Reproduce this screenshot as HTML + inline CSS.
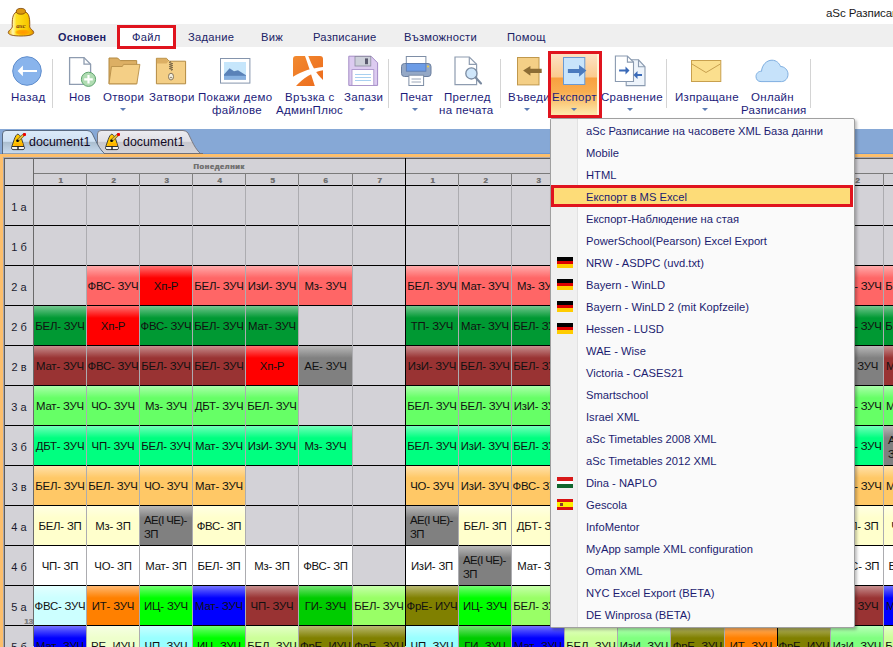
<!DOCTYPE html>
<html><head><meta charset="utf-8">
<style>
*{box-sizing:border-box;margin:0;padding:0}
html,body{width:893px;height:647px;overflow:hidden;background:#fff;font-family:"Liberation Sans",sans-serif}
#root{position:relative;width:893px;height:647px;overflow:hidden}
.abs{position:absolute}
.title{position:absolute;left:826px;top:6px;font-size:11.6px;color:#1a1a1a;white-space:nowrap;letter-spacing:-0.1px}
.tabsband{position:absolute;left:0;top:24px;width:893px;height:23px;background:#efefef}
.mt{position:absolute;top:31px;font-size:11.2px;letter-spacing:0.25px;color:#1a2266;white-space:nowrap}
.filebox{position:absolute;left:117px;top:25px;width:59px;height:24px;border:3px solid #e0141e;background:#fff}
.rl{position:absolute;font-size:11.5px;letter-spacing:0.3px;color:#1c1c7a;white-space:nowrap;text-align:center;line-height:12px}
.sep{position:absolute;top:59px;width:1px;height:49px;background:#d4d4d4}
.arr{position:absolute;top:108px;width:0;height:0;border-left:3px solid transparent;border-right:3px solid transparent;border-top:3px solid #5a7bb4}
.docband{position:absolute;left:0;top:129px;width:893px;height:25px;background:#86a8d6}
.orange{position:absolute;left:0;top:154px;width:893px;height:493px;background:#fdbf6c}
.grid{position:absolute;left:3px;top:157px;width:890px;height:490px;background:#d3d2d7;border-left:1px solid #a8a8b0;border-top:1px solid #a8a8b0;box-shadow:inset 1px 1px 0 #5e5e5e}
.c{position:absolute;width:52px;height:39px;font-size:11.4px;line-height:41px;text-align:center;color:#111;white-space:nowrap;overflow:hidden;letter-spacing:-0.2px}
.c.t2{line-height:13.5px;padding-top:8px;text-align:left;padding-left:4px;letter-spacing:-0.6px}
.hl{position:absolute;left:5px;width:888px;height:1px;background:#000}
.vl{position:absolute;top:185px;width:1px;height:462px;background:#acacb0}
.vd{position:absolute;top:158px;width:1px;height:488px;background:#000}
.hvl{position:absolute;top:173px;width:1px;height:12px;background:#808080}
.dayname{position:absolute;top:162px;font-size:7.5px;font-weight:bold;color:#707070;text-align:center;letter-spacing:0.6px;text-shadow:0.5px 0 0 #707070}
.colnum{position:absolute;top:176px;width:53px;font-size:8px;font-weight:bold;color:#707070;text-align:center;text-shadow:0.5px 0 0 #707070;padding-left:2px}
.rh{position:absolute;left:5px;width:28px;height:39px;line-height:42px;font-size:11px;color:#1a1a2e;text-align:center}
.menu{position:absolute;left:550px;top:118px;width:305px;height:510px;background:#fafafa;border:1px solid #a0a0a0;border-radius:2px;box-shadow:2px 2px 3px rgba(0,0,0,0.25)}
.micol{position:absolute;left:0;top:0;width:27px;height:508px;background:#f0f0f0;border-right:1px solid #e2e2e2}
.mi{position:absolute;left:35px;height:22px;line-height:24px;font-size:11.2px;color:#1c1c70;white-space:nowrap}
.mhl{position:absolute;left:0;width:302px;height:22px;background:#fddc78;border:3px solid #e0141e}
.flag{position:absolute;left:6px;width:16px;height:11px}
</style></head><body><div id="root">
<!-- title -->
<div class="title">aSc Разписание на часовете</div>
<div class="tabsband"></div>
<!-- bell logo -->
<svg class="abs" style="left:0;top:0" width="40" height="40" viewBox="0 0 40 40">
 <defs>
  <linearGradient id="bgh" x1="0" y1="0" x2="1" y2="0"><stop offset="0" stop-color="#f0b000"/><stop offset="0.18" stop-color="#fff6b0"/><stop offset="0.32" stop-color="#ffe020"/><stop offset="0.75" stop-color="#f8c800"/><stop offset="1" stop-color="#e09000"/></linearGradient>
  <radialGradient id="bgo" cx="0.5" cy="0.5" r="0.5"><stop offset="0" stop-color="#ff9800"/><stop offset="0.7" stop-color="#ffa800"/><stop offset="1" stop-color="#ffc000" stop-opacity="0"/></radialGradient>
 </defs>
 <path d="M12.3 27 C12 20 12.5 14 16 12.3 C18 11.3 24 11.3 26 12.3 C29.5 14 30 20 29.7 27 C30 29 33.5 30 33.7 32.5 C33.8 35 28 36 21 36 C14 36 8.2 35 8.3 32.5 C8.5 30 12 29 12.3 27 Z" fill="url(#bgh)" stroke="#8a4a10" stroke-width="0.9"/>
 <ellipse cx="23" cy="32.3" rx="8.5" ry="3.2" fill="url(#bgo)"/>
 <ellipse cx="20.9" cy="11.3" rx="4.6" ry="2.9" fill="#dc9812" stroke="#7a4000" stroke-width="0.8"/>
 <text x="21" y="28" font-size="7" font-weight="bold" font-style="italic" text-anchor="middle" fill="#7a3a10" font-family="Liberation Serif">asc</text>
</svg>
<div class="mt" style="left:58px;font-weight:bold;font-size:10.8px">Основен</div>
<div class="filebox"></div>
<div class="mt" style="left:132px">Файл</div>
<div class="mt" style="left:188px">Задание</div>
<div class="mt" style="left:261px">Виж</div>
<div class="mt" style="left:313px">Разписание</div>
<div class="mt" style="left:404px">Възможности</div>
<div class="mt" style="left:507px">Помощ</div>

<!-- ribbon -->
<svg class="abs" style="left:12px;top:56px" width="30" height="30" viewBox="0 0 30 30">
 <circle cx="15" cy="15" r="14.3" fill="#89b4ec" stroke="#5f8dcc" stroke-width="1"/>
 <path d="M5.6 15 L10.9 9.6 L10.9 13.9 L25 13.9 L25 16.1 L10.9 16.1 L10.9 20.3 Z" fill="#fff"/>
</svg>
<div class="rl" style="left:11px;top:91px">Назад</div>
<div class="sep" style="left:52px"></div>

<svg class="abs" style="left:67px;top:56px" width="32" height="32" viewBox="0 0 32 32">
 <path d="M2.6 1.6 L17 1.6 L23.6 8.2 L23.6 28.4 L2.6 28.4 Z" fill="#fff" stroke="#8e9cb0" stroke-width="1.3"/>
 <path d="M17 1.6 L17 8.2 L23.6 8.2" fill="none" stroke="#8e9cb0" stroke-width="1.3"/>
 <circle cx="21.5" cy="23.3" r="7.1" fill="#b0dcb2" stroke="#5ea46e" stroke-width="1"/>
 <path d="M21.5 19 V27.6 M17.2 23.3 H25.8" stroke="#fff" stroke-width="2.2"/>
</svg>
<div class="rl" style="left:69px;top:91px">Нов</div>

<svg class="abs" style="left:108px;top:57px" width="33" height="28" viewBox="0 0 33 28">
 <path d="M1 1 L9.6 1 L12.2 3.6 L28.7 3.6 L28.7 26.8 L1 26.8 Z" fill="#dcaf64" stroke="#b38a42" stroke-width="1"/>
 <path d="M3.5 9.5 L14.3 9.5 L15.5 7.4 L31.9 7.4 L28.8 26.8 L1 26.8 Z" fill="#f4cf86" stroke="#b8904a" stroke-width="0.9"/>
</svg>
<div class="rl" style="left:103px;top:91px">Отвори</div>
<div class="arr" style="left:120px"></div>

<svg class="abs" style="left:155px;top:57px" width="32" height="28" viewBox="0 0 32 28">
 <path d="M1.4 1.3 L11.5 1.3 L14 4.2 L30.6 4.2 L30.6 26.8 L1.4 26.8 Z" fill="#f4cf86" stroke="#b38a42" stroke-width="1"/>
 <path d="M1.9 1.8 L11.3 1.8 L13.4 4.2 L11.6 6.6 L1.9 6.6 Z" fill="#dcaf64"/>
 <path d="M16 4.6 l-1.7 1 l3.4 1 l-3.4 1 l3.4 1 l-3.4 1 l3.4 1 l-3.4 1 l3.4 1 l-1.7 0.8" fill="none" stroke="#6a5a40" stroke-width="0.9"/>
 <ellipse cx="16" cy="19.6" rx="2.5" ry="3.4" fill="#f4f0e0" stroke="#7a6a50" stroke-width="0.9"/>
 <circle cx="16" cy="20.5" r="0.8" fill="#7a6a50"/>
</svg>
<div class="rl" style="left:149px;top:91px">Затвори</div>

<svg class="abs" style="left:220px;top:58px" width="31" height="26" viewBox="0 0 31 26">
 <rect x="0.5" y="0.5" width="29.4" height="24.6" fill="#fff" stroke="#8494ac" stroke-width="1"/>
 <rect x="4" y="4" width="22" height="17.4" fill="#c6e6fb"/>
 <path d="M4 16.5 L9.6 10.2 L14 13.2 L18 12.2 L26 17.2 L26 21.4 L4 21.4 Z" fill="#5a82b8"/>
 <path d="M4 17.8 L26 17.8 L26 21.4 L4 21.4 Z" fill="#86b0e0"/>
</svg>
<div class="rl" style="left:198px;top:91px">Покажи демо</div>
<div class="rl" style="left:212px;top:104px">файлове</div>

<svg class="abs" style="left:293px;top:56px" width="30" height="30" viewBox="0 0 30 30">
 <defs><linearGradient id="ap" x1="0" y1="0" x2="1" y2="1"><stop offset="0" stop-color="#f28a30"/><stop offset="1" stop-color="#ec6a1c"/></linearGradient></defs>
 <rect x="0" y="0" width="30" height="30" rx="3" fill="url(#ap)"/>
 <path d="M12 0 L15.3 0 C18.5 9 23.5 18 30 24 L30 30 L21.8 30 C18 18 15 8 12 0 Z" fill="#fff"/>
 <path d="M0 20.7 C9 15 19 12 30 11 L30 14.2 C20 16 10 22 3 30 L0 30 Z" fill="#fff"/>
</svg>
<div class="rl" style="left:285px;top:91px">Връзка с</div>
<div class="rl" style="left:276px;top:104px">АдминПлюс</div>

<svg class="abs" style="left:348px;top:55px" width="31" height="31" viewBox="0 0 31 31">
 <path d="M0.8 1.2 L23 1.2 L29.6 7.8 L29.6 30.4 L0.8 30.4 Z" fill="#dccbf0" stroke="#a48cc6" stroke-width="1"/>
 <rect x="7" y="1.5" width="15.8" height="9.5" fill="#cdd0da" stroke="#8a8a9e" stroke-width="0.8"/>
 <rect x="17" y="3.4" width="3" height="5.8" fill="#5a5a6e"/>
 <rect x="4" y="14.6" width="21.8" height="15.8" fill="#fff" stroke="#a48cc6" stroke-width="0.8"/>
 <path d="M7 19.5 H23 M7 22.5 H23 M7 25.5 H23" stroke="#a8d0f0" stroke-width="1"/>
</svg>
<div class="rl" style="left:344px;top:91px">Запази</div>
<div class="arr" style="left:359px"></div>
<div class="sep" style="left:388px"></div>

<svg class="abs" style="left:401px;top:56px" width="31" height="30" viewBox="0 0 31 30">
 <rect x="5.3" y="0.5" width="19.6" height="8" fill="#fff" stroke="#7e8ea6" stroke-width="1"/>
 <rect x="0.5" y="7.5" width="29.5" height="13" rx="3" fill="#94a8c6" stroke="#6a7e9e" stroke-width="1"/>
 <rect x="5.3" y="7.5" width="19.6" height="7.7" fill="#6c9ce6" stroke="#5a7ab0" stroke-width="0.8"/>
 <rect x="7.9" y="19.2" width="14.7" height="10.3" fill="#fff" stroke="#7e8ea6" stroke-width="1"/>
 <path d="M10.5 23 H20 M10.5 26 H20" stroke="#9aa6b8" stroke-width="1"/>
 <circle cx="27" cy="10.5" r="1" fill="#f0d040"/>
</svg>
<div class="rl" style="left:400px;top:91px">Печат</div>
<div class="arr" style="left:412px"></div>

<svg class="abs" style="left:454px;top:56px" width="29" height="30" viewBox="0 0 29 30">
 <path d="M1 1 L15.3 1 L22.6 8.3 L22.6 28.7 L1 28.7 Z" fill="#fff" stroke="#8e9cb0" stroke-width="1.2"/>
 <path d="M15.3 1 L15.3 8.3 L22.6 8.3" fill="none" stroke="#8e9cb0" stroke-width="1.2"/>
 <circle cx="17.4" cy="17.4" r="5.6" fill="#cfe6fa" stroke="#7a8aa0" stroke-width="1.3"/>
 <path d="M21.6 21.6 L27 27.4" stroke="#7a8aa0" stroke-width="2.2" stroke-linecap="round"/>
</svg>
<div class="rl" style="left:444px;top:91px">Преглед</div>
<div class="rl" style="left:439px;top:104px">на печата</div>
<div class="sep" style="left:500px"></div>

<svg class="abs" style="left:516px;top:56px" width="28" height="30" viewBox="0 0 28 30">
 <rect x="1.5" y="1.5" width="21.5" height="27.4" fill="#f4cf86" stroke="#c0984c" stroke-width="1"/>
 <path d="M7.1 14.5 L14.4 10 L14.4 12.75 L25.7 12.75 L25.7 16.9 L14.4 16.9 L14.4 19.7 Z" fill="#8c6c34"/>
</svg>
<div class="rl" style="left:508px;top:91px">Въведи</div>
<div class="arr" style="left:524px"></div>

<!-- export highlighted -->
<div class="abs" style="left:548px;top:51px;width:54px;height:67px;border:3px solid #e0141e;background:linear-gradient(#fde2c4 0,#fbca8e 23px,#f8a040 24px,#f9ae50 38px,#fde8aa 60px);box-shadow:inset -2px 0 0 #fff4d8"></div>
<svg class="abs" style="left:563px;top:57px" width="28" height="28" viewBox="0 0 28 28">
 <rect x="0.5" y="0.5" width="21.3" height="27" fill="#c8e4fb" stroke="#6a9ad4" stroke-width="1"/>
 <path d="M23.4 13.6 L16.1 8 L16.1 11.9 L4.9 11.9 L4.9 15.9 L16.1 15.9 L16.1 19.8 Z" fill="#4a7abe"/>
</svg>
<div class="rl" style="left:552px;top:91px">Експорт</div>
<div class="arr" style="left:571px"></div>

<svg class="abs" style="left:614px;top:55px" width="32" height="32" viewBox="0 0 32 32">
 <path d="M12.2 4.8 L24.5 4.8 L31 11.8 L31 30.6 L12.2 30.6 Z" fill="#eef4fb" stroke="#8a9ab0" stroke-width="1.1"/>
 <path d="M24.5 4.8 L24.5 11.8 L31 11.8" fill="none" stroke="#8a9ab0" stroke-width="1.1"/>
 <path d="M1.4 1 L13.4 1 L19.5 7.1 L19.5 26.5 L1.4 26.5 Z" fill="#fff" stroke="#8a9ab0" stroke-width="1.1"/>
 <path d="M13.4 1 L13.4 7.1 L19.5 7.1" fill="none" stroke="#8a9ab0" stroke-width="1.1"/>
 <path d="M5.1 14.6 L11.5 14.6 L11.5 11.6 L15.5 15.6 L11.5 19.6 L11.5 16.6 L5.1 16.6 Z" fill="#3a6ab8"/>
 <path d="M28 19 L23.5 19 L23.5 16 L19.5 20 L23.5 24 L23.5 21 L28 21 Z" fill="#3a6ab8"/>
</svg>
<div class="rl" style="left:601px;top:91px">Сравнение</div>
<div class="arr" style="left:627px"></div>
<div class="sep" style="left:666px"></div>

<svg class="abs" style="left:690px;top:59px" width="32" height="24" viewBox="0 0 32 24">
 <rect x="1.5" y="1.5" width="29.3" height="21" fill="#fbdf8e" stroke="#c8a04e" stroke-width="1"/>
 <path d="M2 5 L16 13.5 L30.3 5" fill="none" stroke="#c8a04e" stroke-width="1"/>
</svg>
<div class="rl" style="left:675px;top:91px">Изпращане</div>
<div class="arr" style="left:702px"></div>

<svg class="abs" style="left:755px;top:59px" width="34" height="24" viewBox="0 0 34 24">
 <path d="M6 22.6 C2.5 22.6 1 20 1 17.5 C1 14.5 3.5 12 6.5 12.3 C7 6 11.5 1.2 17 1.2 C21.5 1.2 24.5 4.5 25.5 7.5 C29.5 7.5 33 11 33 15.2 C33 19.5 30 22.6 26.5 22.6 Z" fill="#c6e2fa" stroke="#7eaee0" stroke-width="1"/>
</svg>
<div class="rl" style="left:751px;top:91px">Онлайн</div>
<div class="rl" style="left:741px;top:104px">Разписания</div>
<div class="sep" style="left:810px"></div>

<!-- document tabs -->
<div class="docband"></div>
<div class="abs" style="left:0;top:153px;width:893px;height:1px;background:#6b97d4"></div>
<svg class="abs" style="left:0;top:129px" width="210" height="26" viewBox="0 0 210 26">
 <defs>
  <linearGradient id="t1" x1="0" y1="0" x2="0" y2="1"><stop offset="0" stop-color="#dceaf8"/><stop offset="0.46" stop-color="#d0e2f4"/><stop offset="0.5" stop-color="#abbecf"/><stop offset="1" stop-color="#cadcf0"/></linearGradient>
  <linearGradient id="t2" x1="0" y1="0" x2="0" y2="1"><stop offset="0" stop-color="#ececf0"/><stop offset="0.46" stop-color="#e0e0e6"/><stop offset="0.5" stop-color="#c8c8ce"/><stop offset="1" stop-color="#d4d4da"/></linearGradient>
 </defs>
 <path d="M97.5 25 L97.5 5 Q97.5 1.5 101 1.5 L183 1.5 Q186 1.5 188 4 C192 12 195 20 201 25 Z" fill="url(#t2)" stroke="#7a7a82" stroke-width="1"/>
 <path d="M2.5 25 L2.5 5 Q2.5 1.5 6 1.5 L87 1.5 Q90 1.5 92 4 C96 12 99 20 105 25 Z" fill="url(#t1)" stroke="#5a6a80" stroke-width="1"/>
 <path d="M105 24.5 L203 24.5" stroke="#707078" stroke-width="1"/>
</svg>
<svg class="abs" style="left:11px;top:133px" width="17" height="18" viewBox="0 0 17 18">
 <path d="M6.8 1.2 C5.6 1.2 4.2 3.5 3.2 6.5 L0.8 13.5 L13 13.5 L10.8 6.5 C9.8 3.5 8 1.2 6.8 1.2 Z" fill="#ffc800" stroke="#333" stroke-width="0.9"/>
 <path d="M3 13 L11.8 13 L12.8 10 L3.5 10 Z" fill="#ffa000" opacity="0.5"/>
 <path d="M1 13.5 C0 14.5 0.5 16.6 2 16.6 L12 16.6 C13.5 16.6 14 14.5 13 13.5 Z" fill="#f4f4f4" stroke="#222" stroke-width="0.9"/>
 <path d="M7 13.6 V16.4" stroke="#111" stroke-width="1.3"/>
 <path d="M6.7 7.6 L12.6 1.9" stroke="#6a5a20" stroke-width="2.8" stroke-linecap="round"/>
 <path d="M6.9 7.4 L12.4 2.1" stroke="#e8c040" stroke-width="1.6"/>
 <rect x="12" y="0" width="3" height="3" rx="1" fill="#ee0000"/>
 <circle cx="6.6" cy="7.8" r="1.3" fill="#000"/>
</svg>
<div class="abs" style="left:29px;top:135px;font-size:12.4px;color:#120a24">document1</div>
<svg class="abs" style="left:105px;top:133px" width="17" height="18" viewBox="0 0 17 18">
 <path d="M6.8 1.2 C5.6 1.2 4.2 3.5 3.2 6.5 L0.8 13.5 L13 13.5 L10.8 6.5 C9.8 3.5 8 1.2 6.8 1.2 Z" fill="#ffc800" stroke="#333" stroke-width="0.9"/>
 <path d="M3 13 L11.8 13 L12.8 10 L3.5 10 Z" fill="#ffa000" opacity="0.5"/>
 <path d="M1 13.5 C0 14.5 0.5 16.6 2 16.6 L12 16.6 C13.5 16.6 14 14.5 13 13.5 Z" fill="#f4f4f4" stroke="#222" stroke-width="0.9"/>
 <path d="M7 13.6 V16.4" stroke="#111" stroke-width="1.3"/>
 <path d="M6.7 7.6 L12.6 1.9" stroke="#6a5a20" stroke-width="2.8" stroke-linecap="round"/>
 <path d="M6.9 7.4 L12.4 2.1" stroke="#e8c040" stroke-width="1.6"/>
 <rect x="12" y="0" width="3" height="3" rx="1" fill="#ee0000"/>
 <circle cx="6.6" cy="7.8" r="1.3" fill="#000"/>
</svg>
<div class="abs" style="left:123px;top:135px;font-size:12.4px;color:#120a24">document1</div>

<!-- grid -->
<div class="orange"></div>
<div class="grid"></div>
<div class="abs" style="left:33px;top:173px;width:860px;height:1px;background:#7a7a7a"></div>
<div class="dayname" style="left:33px;width:372px">Понеделник</div>
<div class="colnum" style="left:33px">1</div>
<div class="colnum" style="left:86px">2</div>
<div class="hvl" style="left:86px"></div>
<div class="colnum" style="left:139px">3</div>
<div class="hvl" style="left:139px"></div>
<div class="colnum" style="left:192px">4</div>
<div class="hvl" style="left:192px"></div>
<div class="colnum" style="left:245px">5</div>
<div class="hvl" style="left:245px"></div>
<div class="colnum" style="left:298px">6</div>
<div class="hvl" style="left:298px"></div>
<div class="colnum" style="left:352px">7</div>
<div class="hvl" style="left:352px"></div>
<div class="colnum" style="left:405px">1</div>
<div class="colnum" style="left:458px">2</div>
<div class="hvl" style="left:458px"></div>
<div class="colnum" style="left:511px">3</div>
<div class="hvl" style="left:511px"></div>
<div class="colnum" style="left:564px">4</div>
<div class="hvl" style="left:564px"></div>
<div class="colnum" style="left:617px">5</div>
<div class="hvl" style="left:617px"></div>
<div class="colnum" style="left:670px">6</div>
<div class="hvl" style="left:670px"></div>
<div class="colnum" style="left:724px">7</div>
<div class="hvl" style="left:724px"></div>
<div class="colnum" style="left:777px">1</div>
<div class="colnum" style="left:830px">2</div>
<div class="hvl" style="left:830px"></div>
<div class="colnum" style="left:883px">3</div>
<div class="hvl" style="left:883px"></div>
<div class="colnum" style="left:936px">4</div>
<div class="hvl" style="left:936px"></div>
<div class="colnum" style="left:989px">5</div>
<div class="hvl" style="left:989px"></div>
<div class="colnum" style="left:1042px">6</div>
<div class="hvl" style="left:1042px"></div>
<div class="colnum" style="left:1096px">7</div>
<div class="hvl" style="left:1096px"></div>
<div class="rh" style="top:186px">1 a</div>
<div class="rh" style="top:226px">1 б</div>
<div class="rh" style="top:266px">2 a</div>
<div class="c" style="left:87px;top:266px;width:52px;background:linear-gradient(#ffabab,#ff6666 12px)">ФВС- ЗУЧ</div>
<div class="c" style="left:140px;top:266px;width:52px;background:linear-gradient(#ff7373,#ff0000 12px)">Хп-Р</div>
<div class="c" style="left:193px;top:266px;width:52px;background:linear-gradient(#ffabab,#ff6666 12px)">БЕЛ- ЗУЧ</div>
<div class="c" style="left:246px;top:266px;width:52px;background:linear-gradient(#ffabab,#ff6666 12px)">ИзИ- ЗУЧ</div>
<div class="c" style="left:299px;top:266px;width:53px;background:linear-gradient(#ffabab,#ff6666 12px)">Мз- ЗУЧ</div>
<div class="c" style="left:406px;top:266px;width:52px;background:linear-gradient(#ffabab,#ff6666 12px)">БЕЛ- ЗУЧ</div>
<div class="c" style="left:459px;top:266px;width:52px;background:linear-gradient(#ffabab,#ff6666 12px)">Мат- ЗУЧ</div>
<div class="c" style="left:512px;top:266px;width:52px;background:linear-gradient(#ffabab,#ff6666 12px)">Мз- ЗУЧ</div>
<div class="c" style="left:831px;top:266px;width:52px;background:linear-gradient(#ffabab,#ff6666 12px)">БЕЛ- ЗУЧ</div>
<div class="c" style="left:884px;top:266px;width:52px;background:linear-gradient(#ffabab,#ff6666 12px)">БЕЛ- ЗУЧ</div>
<div class="rh" style="top:306px">2 б</div>
<div class="c" style="left:34px;top:306px;width:52px;background:linear-gradient(#73c78f,#009933 12px)">БЕЛ- ЗУЧ</div>
<div class="c" style="left:87px;top:306px;width:52px;background:linear-gradient(#ff7373,#ff0000 12px)">Хп-Р</div>
<div class="c" style="left:140px;top:306px;width:52px;background:linear-gradient(#73c78f,#009933 12px)">ФВС- ЗУЧ</div>
<div class="c" style="left:193px;top:306px;width:52px;background:linear-gradient(#73c78f,#009933 12px)">БЕЛ- ЗУЧ</div>
<div class="c" style="left:246px;top:306px;width:52px;background:linear-gradient(#73c78f,#009933 12px)">Мат- ЗУЧ</div>
<div class="c" style="left:406px;top:306px;width:52px;background:linear-gradient(#73c78f,#009933 12px)">ТП- ЗУЧ</div>
<div class="c" style="left:459px;top:306px;width:52px;background:linear-gradient(#73c78f,#009933 12px)">Мат- ЗУЧ</div>
<div class="c" style="left:512px;top:306px;width:52px;background:linear-gradient(#73c78f,#009933 12px)">БЕЛ- ЗУЧ</div>
<div class="c" style="left:831px;top:306px;width:52px;background:linear-gradient(#73c78f,#009933 12px)">БЕЛ- ЗУЧ</div>
<div class="c" style="left:884px;top:306px;width:52px;background:linear-gradient(#73c78f,#009933 12px)">БЕЛ- ЗУЧ</div>
<div class="rh" style="top:346px">2 в</div>
<div class="c" style="left:34px;top:346px;width:52px;background:linear-gradient(#c78f8f,#993333 12px)">Мат- ЗУЧ</div>
<div class="c" style="left:87px;top:346px;width:52px;background:linear-gradient(#c78f8f,#993333 12px)">ФВС- ЗУЧ</div>
<div class="c" style="left:140px;top:346px;width:52px;background:linear-gradient(#c78f8f,#993333 12px)">БЕЛ- ЗУЧ</div>
<div class="c" style="left:193px;top:346px;width:52px;background:linear-gradient(#c78f8f,#993333 12px)">БЕЛ- ЗУЧ</div>
<div class="c" style="left:246px;top:346px;width:52px;background:linear-gradient(#ff7373,#ff0000 12px)">Хп-Р</div>
<div class="c" style="left:299px;top:346px;width:53px;background:linear-gradient(#b9b9b9,#808080 12px)">АЕ- ЗУЧ</div>
<div class="c" style="left:406px;top:346px;width:52px;background:linear-gradient(#c78f8f,#993333 12px)">ИзИ- ЗУЧ</div>
<div class="c" style="left:459px;top:346px;width:52px;background:linear-gradient(#c78f8f,#993333 12px)">БЕЛ- ЗУЧ</div>
<div class="c" style="left:512px;top:346px;width:52px;background:linear-gradient(#c78f8f,#993333 12px)">БЕЛ- ЗУЧ</div>
<div class="c" style="left:831px;top:346px;width:52px;background:linear-gradient(#b9b9b9,#808080 12px)">АЕ- ЗУЧ</div>
<div class="c" style="left:884px;top:346px;width:52px;background:linear-gradient(#c78f8f,#993333 12px)">Мат- ЗУЧ</div>
<div class="rh" style="top:386px">3 a</div>
<div class="c" style="left:34px;top:386px;width:52px;background:linear-gradient(#abffab,#66ff66 12px)">Мат- ЗУЧ</div>
<div class="c" style="left:87px;top:386px;width:52px;background:linear-gradient(#abffab,#66ff66 12px)">ЧО- ЗУЧ</div>
<div class="c" style="left:140px;top:386px;width:52px;background:linear-gradient(#abffab,#66ff66 12px)">Мз- ЗУЧ</div>
<div class="c" style="left:193px;top:386px;width:52px;background:linear-gradient(#abffab,#66ff66 12px)">ДБТ- ЗУЧ</div>
<div class="c" style="left:246px;top:386px;width:52px;background:linear-gradient(#abffab,#66ff66 12px)">БЕЛ- ЗУЧ</div>
<div class="c" style="left:406px;top:386px;width:52px;background:linear-gradient(#abffab,#66ff66 12px)">БЕЛ- ЗУЧ</div>
<div class="c" style="left:459px;top:386px;width:52px;background:linear-gradient(#abffab,#66ff66 12px)">БЕЛ- ЗУЧ</div>
<div class="c" style="left:512px;top:386px;width:52px;background:linear-gradient(#abffab,#66ff66 12px)">ИзИ- ЗУЧ</div>
<div class="c" style="left:831px;top:386px;width:52px;background:linear-gradient(#abffab,#66ff66 12px)">БЕЛ- ЗУЧ</div>
<div class="c" style="left:884px;top:386px;width:52px;background:linear-gradient(#abffab,#66ff66 12px)">Мат- ЗУЧ</div>
<div class="rh" style="top:426px">3 б</div>
<div class="c" style="left:34px;top:426px;width:52px;background:linear-gradient(#73ffb9,#00ff80 12px)">ДБТ- ЗУЧ</div>
<div class="c" style="left:87px;top:426px;width:52px;background:linear-gradient(#73ffb9,#00ff80 12px)">ЧП- ЗУЧ</div>
<div class="c" style="left:140px;top:426px;width:52px;background:linear-gradient(#73ffb9,#00ff80 12px)">БЕЛ- ЗУЧ</div>
<div class="c" style="left:193px;top:426px;width:52px;background:linear-gradient(#73ffb9,#00ff80 12px)">Мат- ЗУЧ</div>
<div class="c" style="left:246px;top:426px;width:52px;background:linear-gradient(#73ffb9,#00ff80 12px)">ИзИ- ЗУЧ</div>
<div class="c" style="left:299px;top:426px;width:53px;background:linear-gradient(#73ffb9,#00ff80 12px)">Мз- ЗУЧ</div>
<div class="c" style="left:406px;top:426px;width:52px;background:linear-gradient(#73ffb9,#00ff80 12px)">БЕЛ- ЗУЧ</div>
<div class="c" style="left:459px;top:426px;width:52px;background:linear-gradient(#73ffb9,#00ff80 12px)">ИзИ- ЗУЧ</div>
<div class="c" style="left:512px;top:426px;width:52px;background:linear-gradient(#73ffb9,#00ff80 12px)">БЕЛ- ЗУЧ</div>
<div class="c" style="left:831px;top:426px;width:52px;background:linear-gradient(#73ffb9,#00ff80 12px)">БЕЛ- ЗУЧ</div>
<div class="c t2" style="left:884px;top:426px;width:52px;background:linear-gradient(#b9b9b9,#808080 12px)">АЕ(І ЧЕ)-<br>ЗП</div>
<div class="rh" style="top:466px">3 в</div>
<div class="c" style="left:34px;top:466px;width:52px;background:linear-gradient(#ffe1ab,#ffc866 12px)">БЕЛ- ЗУЧ</div>
<div class="c" style="left:87px;top:466px;width:52px;background:linear-gradient(#ffe1ab,#ffc866 12px)">БЕЛ- ЗУЧ</div>
<div class="c" style="left:140px;top:466px;width:52px;background:linear-gradient(#ffe1ab,#ffc866 12px)">ЧО- ЗУЧ</div>
<div class="c" style="left:193px;top:466px;width:52px;background:linear-gradient(#ffe1ab,#ffc866 12px)">Мат- ЗУЧ</div>
<div class="c" style="left:406px;top:466px;width:52px;background:linear-gradient(#ffe1ab,#ffc866 12px)">ЧО- ЗУЧ</div>
<div class="c" style="left:459px;top:466px;width:52px;background:linear-gradient(#ffe1ab,#ffc866 12px)">ИзИ- ЗУЧ</div>
<div class="c" style="left:512px;top:466px;width:52px;background:linear-gradient(#ffe1ab,#ffc866 12px)">ФВС- ЗУЧ</div>
<div class="c" style="left:831px;top:466px;width:52px;background:linear-gradient(#ffe1ab,#ffc866 12px)">БЕЛ- ЗУЧ</div>
<div class="c" style="left:884px;top:466px;width:52px;background:linear-gradient(#ffe1ab,#ffc866 12px)">Мат- ЗУЧ</div>
<div class="rh" style="top:506px">4 a</div>
<div class="c" style="left:34px;top:506px;width:52px;background:linear-gradient(#ffffe3,#ffffcc 12px)">БЕЛ- ЗП</div>
<div class="c" style="left:87px;top:506px;width:52px;background:linear-gradient(#ffffe3,#ffffcc 12px)">Мз- ЗП</div>
<div class="c t2" style="left:140px;top:506px;width:52px;background:linear-gradient(#b9b9b9,#808080 12px)">АЕ(І ЧЕ)-<br>ЗП</div>
<div class="c" style="left:193px;top:506px;width:52px;background:linear-gradient(#ffffe3,#ffffcc 12px)">ФВС- ЗП</div>
<div class="c t2" style="left:406px;top:506px;width:52px;background:linear-gradient(#b9b9b9,#808080 12px)">АЕ(І ЧЕ)-<br>ЗП</div>
<div class="c" style="left:459px;top:506px;width:52px;background:linear-gradient(#ffffe3,#ffffcc 12px)">БЕЛ- ЗП</div>
<div class="c" style="left:512px;top:506px;width:52px;background:linear-gradient(#ffffe3,#ffffcc 12px)">ДБТ- ЗП</div>
<div class="c" style="left:831px;top:506px;width:52px;background:linear-gradient(#ffffe3,#ffffcc 12px)">БЕЛ- ЗП</div>
<div class="c" style="left:884px;top:506px;width:52px;background:linear-gradient(#ffffe3,#ffffcc 12px)">ЧО- ЗП</div>
<div class="rh" style="top:546px">4 б</div>
<div class="c" style="left:34px;top:546px;width:52px;background:linear-gradient(#ffffff,#ffffff 12px)">ЧП- ЗП</div>
<div class="c" style="left:87px;top:546px;width:52px;background:linear-gradient(#ffffff,#ffffff 12px)">ЧО- ЗП</div>
<div class="c" style="left:140px;top:546px;width:52px;background:linear-gradient(#ffffff,#ffffff 12px)">Мат- ЗП</div>
<div class="c" style="left:193px;top:546px;width:52px;background:linear-gradient(#ffffff,#ffffff 12px)">БЕЛ- ЗП</div>
<div class="c" style="left:246px;top:546px;width:52px;background:linear-gradient(#ffffff,#ffffff 12px)">Мз- ЗП</div>
<div class="c" style="left:299px;top:546px;width:53px;background:linear-gradient(#ffffff,#ffffff 12px)">ФВС- ЗП</div>
<div class="c" style="left:406px;top:546px;width:52px;background:linear-gradient(#ffffff,#ffffff 12px)">ИзИ- ЗП</div>
<div class="c t2" style="left:459px;top:546px;width:52px;background:linear-gradient(#b9b9b9,#808080 12px)">АЕ(І ЧЕ)-<br>ЗП</div>
<div class="c" style="left:512px;top:546px;width:52px;background:linear-gradient(#ffffff,#ffffff 12px)">Мат- ЗП</div>
<div class="c" style="left:831px;top:546px;width:52px;background:linear-gradient(#ffffff,#ffffff 12px)">ФВС- ЗП</div>
<div class="c" style="left:884px;top:546px;width:52px;background:linear-gradient(#ffffff,#ffffff 12px)">БЕЛ- ЗП</div>
<div class="rh" style="top:586px">5 a</div>
<div class="c" style="left:34px;top:586px;width:52px;background:linear-gradient(#e3ffff,#ccffff 12px)">ФВС- ЗУЧ</div>
<div class="c" style="left:87px;top:586px;width:52px;background:linear-gradient(#ffb973,#ff8000 12px)">ИТ- ЗУЧ</div>
<div class="c" style="left:140px;top:586px;width:52px;background:linear-gradient(#73ff73,#00ff00 12px)">ИЦ- ЗУЧ</div>
<div class="c" style="left:193px;top:586px;width:52px;background:linear-gradient(#7373ff,#0000ff 12px)">Мат- ЗУЧ</div>
<div class="c" style="left:246px;top:586px;width:52px;background:linear-gradient(#c78f8f,#993333 12px)">ЧП- ЗУЧ</div>
<div class="c" style="left:299px;top:586px;width:53px;background:linear-gradient(#73e373,#00cc00 12px)">ГИ- ЗУЧ</div>
<div class="c" style="left:353px;top:586px;width:52px;background:linear-gradient(#c7ffab,#99ff66 12px)">БЕЛ- ЗУЧ</div>
<div class="c" style="left:406px;top:586px;width:52px;background:linear-gradient(#b9b973,#808000 12px)">ФрЕ- ИУЧ</div>
<div class="c" style="left:459px;top:586px;width:52px;background:linear-gradient(#73ff73,#00ff00 12px)">ИЦ- ЗУЧ</div>
<div class="c" style="left:512px;top:586px;width:52px;background:linear-gradient(#c7ffab,#99ff66 12px)">БЕЛ- ЗУЧ</div>
<div class="c" style="left:831px;top:586px;width:52px;background:linear-gradient(#c78f8f,#993333 12px)">ЧП- ЗУЧ</div>
<div class="c" style="left:884px;top:586px;width:52px;background:linear-gradient(#7373ff,#0000ff 12px)">Мат- ЗУЧ</div>
<div class="rh" style="top:626px">5 б</div>
<div class="c" style="left:34px;top:626px;width:52px;background:linear-gradient(#7373ff,#0000ff 12px)">Мат- ЗУЧ</div>
<div class="c" style="left:87px;top:626px;width:52px;background:linear-gradient(#f6ffe3,#eeffcc 12px)">РЕ- ИУЧ</div>
<div class="c" style="left:140px;top:626px;width:52px;background:linear-gradient(#c7ffff,#99ffff 12px)">ЧП- ЗУЧ</div>
<div class="c" style="left:193px;top:626px;width:52px;background:linear-gradient(#73ff73,#00ff00 12px)">ИЦ- ЗУЧ</div>
<div class="c" style="left:246px;top:626px;width:52px;background:linear-gradient(#e3ffc7,#ccff99 12px)">БЕЛ- ЗУЧ</div>
<div class="c" style="left:299px;top:626px;width:53px;background:linear-gradient(#b9b973,#808000 12px)">ФрЕ- ИУЧ</div>
<div class="c" style="left:353px;top:626px;width:52px;background:linear-gradient(#b9b973,#808000 12px)">ФрЕ- ЗУЧ</div>
<div class="c" style="left:406px;top:626px;width:52px;background:linear-gradient(#c7ffff,#99ffff 12px)">ЧП- ЗУЧ</div>
<div class="c" style="left:459px;top:626px;width:52px;background:linear-gradient(#73e373,#00cc00 12px)">ГИ- ЗУЧ</div>
<div class="c" style="left:512px;top:626px;width:52px;background:linear-gradient(#7373ff,#0000ff 12px)">Мат- ЗУЧ</div>
<div class="c" style="left:565px;top:626px;width:52px;background:linear-gradient(#e3ffc7,#ccff99 12px)">БЕЛ- ЗУЧ</div>
<div class="c" style="left:618px;top:626px;width:52px;background:linear-gradient(#b9ffb9,#80ff80 12px)">ИзИ- ЗУЧ</div>
<div class="c" style="left:671px;top:626px;width:53px;background:linear-gradient(#b9b973,#808000 12px)">ФрЕ- ЗУЧ</div>
<div class="c" style="left:725px;top:626px;width:52px;background:linear-gradient(#ffb973,#ff8000 12px)">ИТ- ЗУЧ</div>
<div class="c" style="left:778px;top:626px;width:52px;background:linear-gradient(#b9b973,#808000 12px)">ФрЕ- ИУЧ</div>
<div class="c" style="left:831px;top:626px;width:52px;background:linear-gradient(#b9ffb9,#80ff80 12px)">ИзИ- ЗУЧ</div>
<div class="c" style="left:884px;top:626px;width:52px;background:linear-gradient(#e3ffc7,#ccff99 12px)">БЕЛ- ЗУЧ</div>
<div class="hl" style="top:185px"></div>
<div class="hl" style="top:225px"></div>
<div class="hl" style="top:265px"></div>
<div class="hl" style="top:305px"></div>
<div class="hl" style="top:345px"></div>
<div class="hl" style="top:385px"></div>
<div class="hl" style="top:425px"></div>
<div class="hl" style="top:465px"></div>
<div class="hl" style="top:505px"></div>
<div class="hl" style="top:545px"></div>
<div class="hl" style="top:585px"></div>
<div class="hl" style="top:625px"></div>
<div class="hl" style="top:665px"></div>
<div class="vd" style="left:33px;background:#6a6a6a"></div>
<div class="vl" style="left:86px"></div>
<div class="vl" style="left:139px"></div>
<div class="vl" style="left:192px"></div>
<div class="vl" style="left:245px"></div>
<div class="vl" style="left:298px"></div>
<div class="vl" style="left:352px"></div>
<div class="vd" style="left:405px"></div>
<div class="vl" style="left:458px"></div>
<div class="vl" style="left:511px"></div>
<div class="vl" style="left:564px"></div>
<div class="vl" style="left:617px"></div>
<div class="vl" style="left:670px"></div>
<div class="vl" style="left:724px"></div>
<div class="vd" style="left:777px"></div>
<div class="vl" style="left:830px"></div>
<div class="vl" style="left:883px"></div>
<div class="vl" style="left:936px"></div>
<div class="abs" style="left:24px;top:617px;font-size:8px;font-weight:bold;color:#808080;line-height:9px;text-shadow:0.5px 0 0 #808080">13</div>

<!-- menu -->
<div class="menu">
<div class="micol"></div>
<div class="mi" style="top:0px">aSc Разписание на часовете XML База данни</div>
<div class="mi" style="top:22px">Mobile</div>
<div class="mi" style="top:44px">HTML</div>
<div class="mhl" style="top:66px"></div>
<div class="mi" style="top:66px">Експорт в MS Excel</div>
<div class="mi" style="top:88px">Експорт-Наблюдение на стая</div>
<div class="mi" style="top:110px">PowerSchool(Pearson) Excel Export</div>
<div class="mi" style="top:132px">NRW - ASDPC (uvd.txt)</div>
<div class="flag" style="top:138px;background:linear-gradient(#000 0 33%,#d00 33% 66%,#fc0 66%)"></div>
<div class="mi" style="top:154px">Bayern - WinLD</div>
<div class="flag" style="top:160px;background:linear-gradient(#000 0 33%,#d00 33% 66%,#fc0 66%)"></div>
<div class="mi" style="top:176px">Bayern - WinLD 2 (mit Kopfzeile)</div>
<div class="flag" style="top:182px;background:linear-gradient(#000 0 33%,#d00 33% 66%,#fc0 66%)"></div>
<div class="mi" style="top:198px">Hessen - LUSD</div>
<div class="flag" style="top:204px;background:linear-gradient(#000 0 33%,#d00 33% 66%,#fc0 66%)"></div>
<div class="mi" style="top:220px">WAE - Wise</div>
<div class="mi" style="top:242px">Victoria - CASES21</div>
<div class="mi" style="top:264px">Smartschool</div>
<div class="mi" style="top:286px">Israel XML</div>
<div class="mi" style="top:308px">aSc Timetables 2008 XML</div>
<div class="mi" style="top:330px">aSc Timetables 2012 XML</div>
<div class="mi" style="top:352px">Dina - NAPLO</div>
<div class="flag" style="top:358px;background:linear-gradient(#d81818 0 33%,#fff 33% 66%,#10662e 66%)"></div>
<div class="mi" style="top:374px">Gescola</div>
<div class="flag" style="top:380px;background:linear-gradient(#d81010 0 27%,#ffee00 27% 73%,#d81010 73%)"></div><div class="abs" style="left:9px;top:384px;width:3px;height:3px;background:#8a3a30"></div>
<div class="mi" style="top:396px">InfoMentor</div>
<div class="mi" style="top:418px">MyApp sample XML configuration</div>
<div class="mi" style="top:440px">Oman XML</div>
<div class="mi" style="top:462px">NYC Excel Export (BETA)</div>
<div class="mi" style="top:484px">DE Winprosa (BETA)</div>
</div>
</div></body></html>
